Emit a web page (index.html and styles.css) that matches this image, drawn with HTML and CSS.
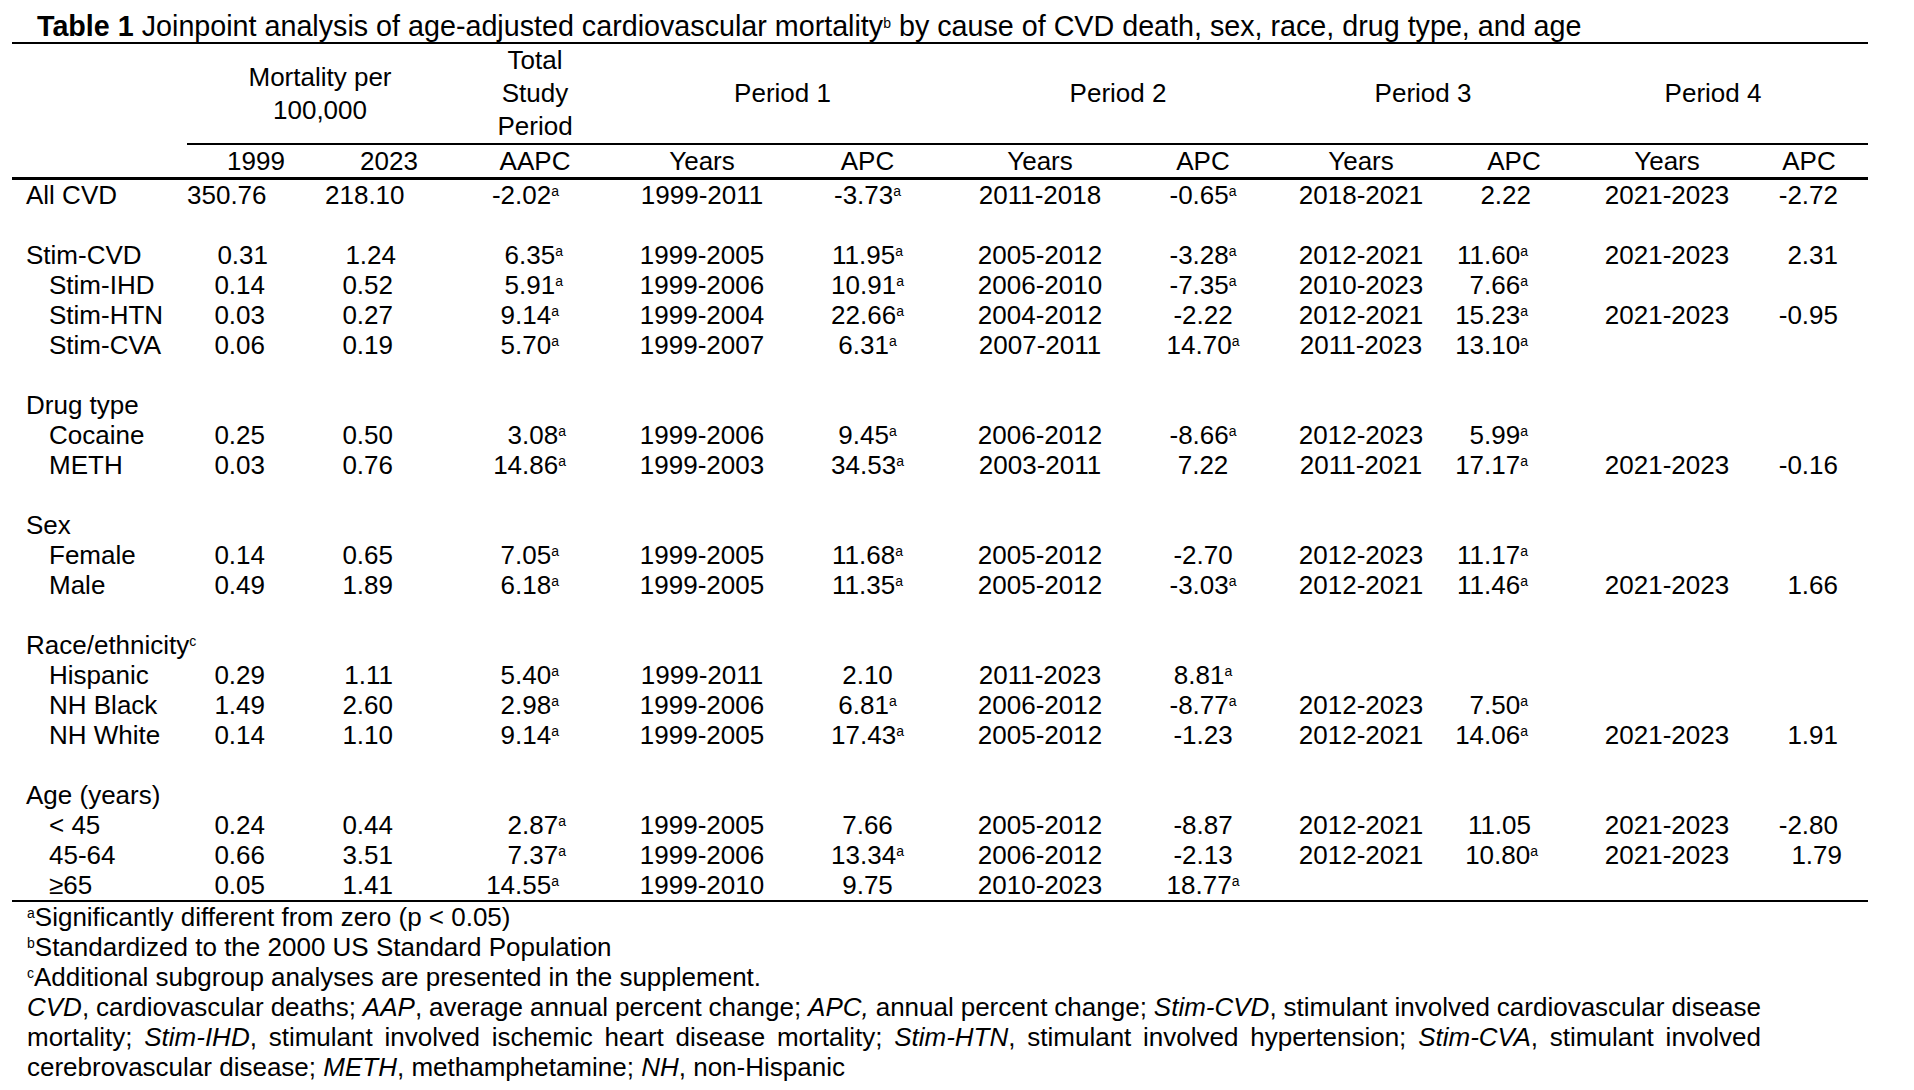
FILE: index.html
```html
<!DOCTYPE html>
<html>
<head>
<meta charset="utf-8">
<link rel="stylesheet" href="styles.css">
</head>
<body>
<div class="page">
  <div class="title"><b>Table 1</b> Joinpoint analysis of age-adjusted cardiovascular mortality<sup>b</sup> by cause of CVD death, sex, race, drug type, and age</div>
  <table class="t">
    <colgroup>
      <col class="c-label"><col class="c-y1999"><col class="c-y2023"><col class="c-aapc">
      <col class="c-yr1"><col class="c-apc1"><col class="c-yr2"><col class="c-apc2">
      <col class="c-yr3"><col class="c-apc3"><col class="c-yr4"><col class="c-apc4">
    </colgroup>
    <thead>
      <tr class="h1">
        <th class="blank"></th>
        <th colspan="2">Mortality per<br>100,000</th>
        <th>Total<br>Study<br>Period</th>
        <th colspan="2">Period 1</th>
        <th colspan="2">Period 2</th>
        <th colspan="2">Period 3</th>
        <th colspan="2">Period 4</th>
      </tr>
      <tr class="h2">
        <th></th><th>1999</th><th>2023</th><th>AAPC</th>
        <th>Years</th><th>APC</th><th>Years</th><th class="a2">APC</th>
        <th>Years</th><th class="a3">APC</th><th>Years</th><th class="a4">APC</th>
      </tr>
    </thead>
    <tbody>
      <tr><td class="lab">All CVD</td><td class="m">350.76</td><td class="m">218.10</td><td class="aa">-2.02<sup>a</sup></td><td>1999-2011</td><td>-3.73<sup>a</sup></td><td>2011-2018</td><td class="a2">-0.65<sup>a</sup></td><td>2018-2021</td><td class="a3 ns">2.22</td><td>2021-2023</td><td class="a4">-2.72</td></tr>
      <tr class="gap"><td colspan="12"></td></tr>
      <tr><td class="lab">Stim-CVD</td><td class="m sp">0.31</td><td class="m sp">1.24</td><td class="aa r1">6.35<sup>a</sup></td><td>1999-2005</td><td>11.95<sup>a</sup></td><td>2005-2012</td><td class="a2">-3.28<sup>a</sup></td><td>2012-2021</td><td class="a3">11.60<sup>a</sup></td><td>2021-2023</td><td class="a4">2.31</td></tr>
      <tr><td class="lab sub">Stim-IHD</td><td class="m">0.14</td><td class="m">0.52</td><td class="aa r1">5.91<sup>a</sup></td><td>1999-2006</td><td>10.91<sup>a</sup></td><td>2006-2010</td><td class="a2">-7.35<sup>a</sup></td><td>2010-2023</td><td class="a3">7.66<sup>a</sup></td><td></td><td></td></tr>
      <tr><td class="lab sub">Stim-HTN</td><td class="m">0.03</td><td class="m">0.27</td><td class="aa">9.14<sup>a</sup></td><td>1999-2004</td><td>22.66<sup>a</sup></td><td>2004-2012</td><td class="a2">-2.22</td><td>2012-2021</td><td class="a3">15.23<sup>a</sup></td><td>2021-2023</td><td class="a4">-0.95</td></tr>
      <tr><td class="lab sub">Stim-CVA</td><td class="m">0.06</td><td class="m">0.19</td><td class="aa">5.70<sup>a</sup></td><td>1999-2007</td><td>6.31<sup>a</sup></td><td>2007-2011</td><td class="a2">14.70<sup>a</sup></td><td>2011-2023</td><td class="a3">13.10<sup>a</sup></td><td></td><td></td></tr>
      <tr class="gap"><td colspan="12"></td></tr>
      <tr><td class="lab">Drug type</td><td colspan="11"></td></tr>
      <tr><td class="lab sub">Cocaine</td><td class="m">0.25</td><td class="m">0.50</td><td class="aa r2">3.08<sup>a</sup></td><td>1999-2006</td><td>9.45<sup>a</sup></td><td>2006-2012</td><td class="a2">-8.66<sup>a</sup></td><td>2012-2023</td><td class="a3">5.99<sup>a</sup></td><td></td><td></td></tr>
      <tr><td class="lab sub">METH</td><td class="m">0.03</td><td class="m">0.76</td><td class="aa r2">14.86<sup>a</sup></td><td>1999-2003</td><td>34.53<sup>a</sup></td><td>2003-2011</td><td class="a2">7.22</td><td>2011-2021</td><td class="a3">17.17<sup>a</sup></td><td>2021-2023</td><td class="a4">-0.16</td></tr>
      <tr class="gap"><td colspan="12"></td></tr>
      <tr><td class="lab">Sex</td><td colspan="11"></td></tr>
      <tr><td class="lab sub">Female</td><td class="m">0.14</td><td class="m">0.65</td><td class="aa">7.05<sup>a</sup></td><td>1999-2005</td><td>11.68<sup>a</sup></td><td>2005-2012</td><td class="a2">-2.70</td><td>2012-2023</td><td class="a3">11.17<sup>a</sup></td><td></td><td></td></tr>
      <tr><td class="lab sub">Male</td><td class="m">0.49</td><td class="m">1.89</td><td class="aa">6.18<sup>a</sup></td><td>1999-2005</td><td>11.35<sup>a</sup></td><td>2005-2012</td><td class="a2">-3.03<sup>a</sup></td><td>2012-2021</td><td class="a3">11.46<sup>a</sup></td><td>2021-2023</td><td class="a4">1.66</td></tr>
      <tr class="gap"><td colspan="12"></td></tr>
      <tr><td class="lab">Race/ethnicity<sup>c</sup></td><td colspan="11"></td></tr>
      <tr><td class="lab sub">Hispanic</td><td class="m">0.29</td><td class="m">1.11</td><td class="aa">5.40<sup>a</sup></td><td>1999-2011</td><td>2.10</td><td>2011-2023</td><td class="a2">8.81<sup>a</sup></td><td></td><td></td><td></td><td></td></tr>
      <tr><td class="lab sub">NH Black</td><td class="m">1.49</td><td class="m">2.60</td><td class="aa">2.98<sup>a</sup></td><td>1999-2006</td><td>6.81<sup>a</sup></td><td>2006-2012</td><td class="a2">-8.77<sup>a</sup></td><td>2012-2023</td><td class="a3">7.50<sup>a</sup></td><td></td><td></td></tr>
      <tr><td class="lab sub">NH White</td><td class="m">0.14</td><td class="m">1.10</td><td class="aa">9.14<sup>a</sup></td><td>1999-2005</td><td>17.43<sup>a</sup></td><td>2005-2012</td><td class="a2">-1.23</td><td>2012-2021</td><td class="a3">14.06<sup>a</sup></td><td>2021-2023</td><td class="a4">1.91</td></tr>
      <tr class="gap"><td colspan="12"></td></tr>
      <tr><td class="lab">Age (years)</td><td colspan="11"></td></tr>
      <tr><td class="lab sub">&lt; 45</td><td class="m">0.24</td><td class="m">0.44</td><td class="aa r2">2.87<sup>a</sup></td><td>1999-2005</td><td>7.66</td><td>2005-2012</td><td class="a2">-8.87</td><td>2012-2021</td><td class="a3 ns">11.05</td><td>2021-2023</td><td class="a4">-2.80</td></tr>
      <tr><td class="lab sub">45-64</td><td class="m">0.66</td><td class="m">3.51</td><td class="aa r2">7.37<sup>a</sup></td><td>1999-2006</td><td>13.34<sup>a</sup></td><td>2006-2012</td><td class="a2">-2.13</td><td>2012-2021</td><td class="a3 sh">10.80<sup>a</sup></td><td>2021-2023</td><td class="a4 sh">1.79</td></tr>
      <tr class="last"><td class="lab sub">≥65</td><td class="m">0.05</td><td class="m">1.41</td><td class="aa">14.55<sup>a</sup></td><td>1999-2010</td><td>9.75</td><td>2010-2023</td><td class="a2">18.77<sup>a</sup></td><td></td><td></td><td></td><td></td></tr>
    </tbody>
  </table>
  <div class="notes">
    <div class="note"><sup>a</sup>Significantly different from zero (p &lt; 0.05)</div>
    <div class="note"><sup>b</sup>Standardized to the 2000 US Standard Population</div>
    <div class="note"><sup>c</sup>Additional subgroup analyses are presented in the supplement.</div>
    <div class="abbr">
      <span class="jl"><i>CVD</i>, cardiovascular deaths; <i>AAP</i>, average annual percent change; <i>APC,</i> annual percent change; <i>Stim-CVD</i>, stimulant involved cardiovascular disease</span>
      <span class="jl">mortality; <i>Stim-IHD</i>, stimulant involved ischemic heart disease mortality; <i>Stim-HTN</i>, stimulant involved hypertension; <i>Stim-CVA</i>, stimulant involved</span>
      <span class="ln">cerebrovascular disease; <i>METH</i>, methamphetamine; <i>NH</i>, non-Hispanic</span>
    </div>
  </div>
</div>
</body>
</html>
```

FILE: styles.css
```css
html, body {
  margin: 0;
  padding: 0;
  background: #ffffff;
  color: #000000;
}

body {
  font-family: "Liberation Sans", Arial, sans-serif;
}

.page {
  width: 1856px;
  padding: 10px 0 0 12px;
}

sup {
  font-size: 14px;
  line-height: 0;
  vertical-align: 8px;
}

.title {
  font-size: 28.7px;
  line-height: 32px;
  padding-left: 25px;
  border-bottom: 2px solid #000;
  white-space: nowrap;
}

.title b {
  font-weight: bold;
}

.t {
  width: 1856px;
  border-collapse: collapse;
  table-layout: fixed;
  font-size: 26px;
}

.c-label { width: 175px; }
.c-y1999 { width: 138px; }
.c-y2023 { width: 128px; }
.c-aapc { width: 164px; }
.c-yr1 { width: 170px; }
.c-apc1 { width: 161px; }
.c-yr2 { width: 184px; }
.c-apc2 { width: 156px; }
.c-yr3 { width: 146px; }
.c-apc3 { width: 124px; }
.c-yr4 { width: 218px; }
.c-apc4 { width: 92px; }

.t th {
  font-weight: normal;
  padding: 0;
  text-align: center;
  vertical-align: middle;
  white-space: nowrap;
}

.h1 th {
  height: 99px;
  line-height: 33px;
  border-bottom: 2px solid #000;
}

.h1 th.blank {
  border-bottom: none;
}

.h2 th {
  height: 32px;
  line-height: 32px;
  border-bottom: 3px solid #000;
}

.h2 th.a2 {
  padding-right: 14px;
}

.h2 th.a3 {
  padding-left: 36px;
}

.h2 th.a4 {
  padding-right: 26px;
}

.t td {
  padding: 0;
  height: 30px;
  line-height: 30px;
  text-align: center;
  white-space: nowrap;
}

.t td.lab {
  text-align: left;
  padding-left: 14px;
}

.t td.lab.sub {
  padding-left: 37px;
}

.t td.m {
  text-align: right;
  padding-right: 60px;
}

.t td.m.sp {
  padding-right: 57px;
}

.t td.aa {
  text-align: right;
  padding-right: 58px;
}

.t td.aa.r1 {
  padding-right: 54px;
}

.t td.aa.r2 {
  padding-right: 51px;
}

.t td.a2 {
  padding-right: 14px;
}

.t td.a3 {
  text-align: right;
  padding-right: 30px;
}

.t td.a3.ns {
  padding-right: 27px;
}

.t td.a3.sh {
  padding-right: 20px;
}

.t td.a4 {
  text-align: right;
  padding-right: 30px;
}

.t td.a4.sh {
  padding-right: 26px;
}

.t tr.last td {
  border-bottom: 2px solid #000;
}

.notes {
  font-size: 26px;
  line-height: 30px;
  padding-left: 15px;
}

.abbr {
  width: 1734px;
  font-size: 26px;
}

.abbr .jl {
  display: block;
  white-space: nowrap;
  word-spacing: -2px;
  text-align: justify;
  text-align-last: justify;
}

.abbr .ln {
  display: block;
}
```
